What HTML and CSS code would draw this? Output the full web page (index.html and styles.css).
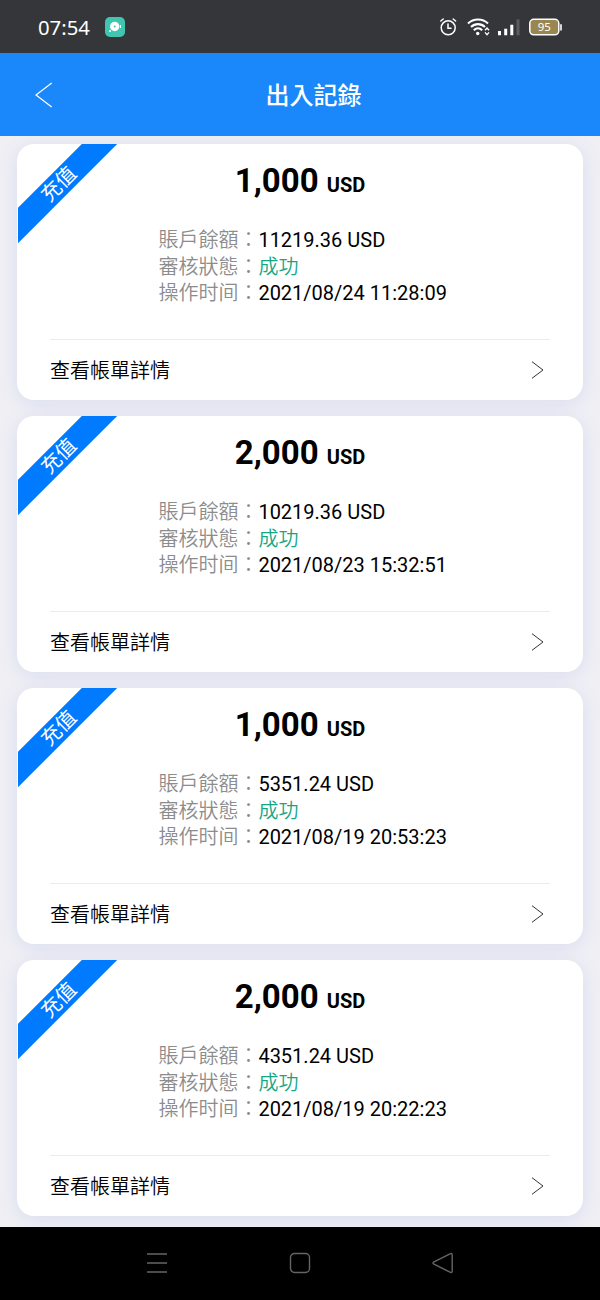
FILE: index.html
```
<!DOCTYPE html>
<html lang="zh-Hant">

<head>
    <meta charset="UTF-8">
    <meta name="viewport" content="width=device-width, initial-scale=1.0">
    <title>出入記錄</title>
    <link rel="stylesheet" href="styles.css">
</head>

<body>
    <div class="screen">
        <div class="status">
            <div class="status__time">07:54</div>
            <svg class="status__app" width="20" height="20" viewBox="0 0 20 20">
                <rect width="20" height="20" rx="5" fill="#3fc6b0" />
                <circle cx="9.7" cy="9.5" r="4.7" fill="#fff" />
                <circle cx="9.7" cy="9.5" r="1" fill="#3fc6b0" />
                <circle cx="5" cy="14" r="1" fill="#fff" />
                <path d="M15.5 8v3" stroke="#fff" stroke-width="1" />
            </svg>
            <svg class="status__icons" width="124" height="20" viewBox="0 0 124 20" fill="none" stroke="#fff">
                <!-- alarm -->
                <g stroke-width="1.5" stroke-linecap="round">
                    <circle cx="9.2" cy="10.8" r="7" />
                    <path d="M9 7v4.2h3M1.8 4l2.4-2M14.2 2l2.4 2" />
                </g>
                <!-- wifi -->
                <g stroke-width="2.1">
                    <path d="M29 6.6c5.500-5.400 14.500-5.400 20 0M32 10c4-3.900 10-3.900 14 0M34.800 13.200c2.500-2.400 5.900-2.400 8.400 0" />
                    <circle cx="38.700" cy="16.500" r="1.700" fill="#fff" stroke="none" />
                    <path d="M46 13.200l2-2.200 2 2.200M46 15.400l2 2.200 2-2.200" stroke-width="1.400" />
                </g>
                <!-- signal -->
                <g stroke-width="3">
                    <path d="M60.500 18.300v-4.300M66.700 18.300v-6.500M72.800 18.300v-10.500" />
                    <path d="M79 18.300v-16" stroke="#5b5b5f" />
                </g>
                <!-- battery -->
                <rect x="90.800" y="2.300" width="29" height="15.500" rx="4" fill="#9a8650" stroke-width="1.500" />
                <path d="M122 7.200v6.200" stroke-width="1.600" />
                <text class="status__level" x="105.300" y="14.300" text-anchor="middle">95</text>
            </svg>
        </div>

        <div class="header">
            <svg class="header__back" width="18" height="26" viewBox="0 0 18 26">
                <path d="M16.700 1L1 13l15.700 12" fill="none" stroke="#fff" stroke-width="1.200" />
            </svg>
            <div class="header__title">出入記錄</div>
        </div>

        <div class="list">
            <div class="card">
                <div class="card__corner"><div class="card__ribbon">充值</div></div>
                <div class="card__amount">1,000 <span class="card__currency">USD</span></div>
                <div class="card__info">
                    <div class="row"><span class="row__label">賬戶餘額：</span>11219.36 USD</div>
                    <div class="row"><span class="row__label">審核狀態：</span><span class="row__success">成功</span></div>
                    <div class="row"><span class="row__label">操作时间：</span>2021/08/24 11:28:09</div>
                </div>
                <div class="card__detail">
                    <div>查看帳單詳情</div>
                    <svg width="13" height="18" viewBox="0 0 13 18"><path d="M1 .7L12 9 1 17.300" fill="none" stroke="#333" /></svg>
                </div>
            </div>

            <div class="card">
                <div class="card__corner"><div class="card__ribbon">充值</div></div>
                <div class="card__amount">2,000 <span class="card__currency">USD</span></div>
                <div class="card__info">
                    <div class="row"><span class="row__label">賬戶餘額：</span>10219.36 USD</div>
                    <div class="row"><span class="row__label">審核狀態：</span><span class="row__success">成功</span></div>
                    <div class="row"><span class="row__label">操作时间：</span>2021/08/23 15:32:51</div>
                </div>
                <div class="card__detail">
                    <div>查看帳單詳情</div>
                    <svg width="13" height="18" viewBox="0 0 13 18"><path d="M1 .7L12 9 1 17.300" fill="none" stroke="#333" /></svg>
                </div>
            </div>

            <div class="card">
                <div class="card__corner"><div class="card__ribbon">充值</div></div>
                <div class="card__amount">1,000 <span class="card__currency">USD</span></div>
                <div class="card__info">
                    <div class="row"><span class="row__label">賬戶餘額：</span>5351.24 USD</div>
                    <div class="row"><span class="row__label">審核狀態：</span><span class="row__success">成功</span></div>
                    <div class="row"><span class="row__label">操作时间：</span>2021/08/19 20:53:23</div>
                </div>
                <div class="card__detail">
                    <div>查看帳單詳情</div>
                    <svg width="13" height="18" viewBox="0 0 13 18"><path d="M1 .7L12 9 1 17.300" fill="none" stroke="#333" /></svg>
                </div>
            </div>

            <div class="card">
                <div class="card__corner"><div class="card__ribbon">充值</div></div>
                <div class="card__amount">2,000 <span class="card__currency">USD</span></div>
                <div class="card__info">
                    <div class="row"><span class="row__label">賬戶餘額：</span>4351.24 USD</div>
                    <div class="row"><span class="row__label">審核狀態：</span><span class="row__success">成功</span></div>
                    <div class="row"><span class="row__label">操作时间：</span>2021/08/19 20:22:23</div>
                </div>
                <div class="card__detail">
                    <div>查看帳單詳情</div>
                    <svg width="13" height="18" viewBox="0 0 13 18"><path d="M1 .7L12 9 1 17.300" fill="none" stroke="#333" /></svg>
                </div>
            </div>
        </div>

        <div class="navbar">
            <svg width="22" height="22" viewBox="0 0 22 22"><path d="M1 2h20M1 11h20M1 20h20" /></svg>
            <svg width="22" height="22" viewBox="0 0 22 22"><rect x="1.500" y="1.500" width="19" height="19" rx="4" /></svg>
            <svg width="22" height="22" viewBox="0 0 22 22"><path d="M2 9.800L18 1.800Q20.200 1 20.200 3v16q0 2-2.200 1.200L2 12.200q-2-1.200 0-2.400z" /></svg>
        </div>
    </div>
</body>

</html>
```
FILE: styles.css
```
body {
    margin: 0;
    font-family: Roboto, 'Noto Sans CJK TC', sans-serif;
    font-size: 20px;
    color: #000;
}

.screen {
    height: 1300px;
    display: flex;
    flex-direction: column;
    overflow: hidden;
    background-color: #f0eff4;
}

.status {
    height: 53px;
    flex: none;
    box-sizing: border-box;
    display: flex;
    align-items: center;
    padding: 0 37px 0 38px;
    background-color: #35363a;
    color: #fff;
}

.status__time {
    width: 67px;
    font-family: 'Noto Sans', sans-serif;
    font-size: 20.3px;
}

.status__icons {
    margin-left: auto;
}

.status__level {
    font-family: 'Noto Sans', sans-serif;
    font-size: 11.5px;
    fill: #fff;
    stroke: none;
}

.header {
    height: 83.4px;
    flex: none;
    display: grid;
    grid-template-columns: 60px 1fr 33px;
    align-items: center;
    background-color: #1a88fa;
    color: #fff;
    position: relative;
    z-index: 1;
}

.header__back {
    margin-left: 35px;
}

.header__title {
    padding-bottom: 2px;
    text-align: center;
    font-size: 24px;
    font-weight: 500;
}

.list {
    flex: 1;
    min-height: 0;
    display: flex;
    flex-direction: column;
    gap: 16.5px;
    padding: 8px 17px 0;
    overflow: hidden;
}

.card {
    height: 255.5px;
    flex: none;
    box-sizing: border-box;
    display: flex;
    flex-direction: column;
    padding: 16px 33px 0;
    position: relative;
    border-radius: 17px;
    background-color: #fff;
    box-shadow: 0 3px 18px rgba(70, 110, 230, 0.14);
}

.card__corner {
    position: absolute;
    top: 0;
    left: 1px;
    width: 100px;
    height: 100px;
    overflow: hidden;
}

.card__ribbon {
    position: absolute;
    top: 28px;
    left: -39px;
    width: 160px;
    height: 25px;
    line-height: 25px;
    text-align: center;
    color: #fff;
    background-color: #007aff;
    transform: rotate(-45deg);
}

.card__amount {
    line-height: 42px;
    text-align: center;
    font-size: 33px;
    font-weight: 700;
}

.card__currency {
    font-size: 20px;
}

.card__info {
    padding: 20.600px 0 0 108.400px;
}

.row {
    height: 26.7px;
    line-height: 26.7px;
}

.row__label {
    color: #8c8c8c;
    font-weight: 350;
}

.row__success {
    color: #13a987;
    font-weight: 350;
}

.card__detail {
    height: 60px;
    margin-top: auto;
    display: flex;
    align-items: center;
    justify-content: space-between;
    padding-right: 6px;
    border-top: 1px solid #ebebed;
    font-weight: 350;
}

.navbar {
    height: 73.5px;
    flex: none;
    display: flex;
    align-items: center;
    justify-content: space-between;
    box-sizing: border-box;
    padding: 0 146px;
    background-color: #000;
}

.navbar svg {
    fill: none;
    stroke: #656565;
    stroke-width: 1.4;
}
```
